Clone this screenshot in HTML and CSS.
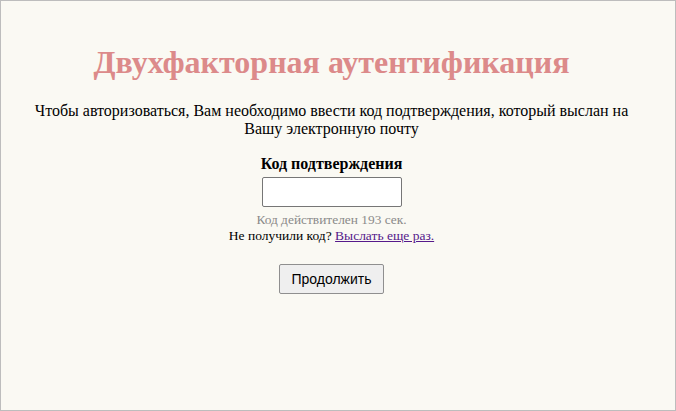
FILE: index.html
```html
<!DOCTYPE html>
<html lang="ru">

<head>
    <meta charset="UTF-8" />
    <meta name="viewport" content="width=device-width, initial-scale=1.0" />
    <title>Двухфакторная аутентификация</title>
    <link rel="stylesheet" href="styles.css">
</head>

<body>
    <div class="frame">
        <div class="container">
            <h1 class="title">Двухфакторная аутентификация</h1>
            <p class="intro">Чтобы авторизоваться, Вам необходимо ввести код подтверждения, который выслан на Вашу электронную почту</p>
            <form class="code-form">
                <label class="code-label" for="code">Код подтверждения</label>
                <input type="text" id="code" class="code-input" />
                <div class="timer">Код действителен 193 сек.</div>
                <div class="resend">Не получили код? <a href="#">Выслать еще раз.</a></div>
                <button type="submit" class="btn">Продолжить</button>
            </form>
        </div>
    </div>
</body>

</html>
```

FILE: styles.css
```css
html,
body {
    margin: 0;
    padding: 0;
}

body {
    font-family: "Liberation Serif", "Times New Roman", serif;
    color: #000;
    background: #faf9f3;
}

.frame {
    box-sizing: border-box;
    height: 411px;
    padding-right: 13px;
    border: 1px solid #bdbdbd;
    background: #faf9f3;
}

.container {
    max-width: 620px;
    margin: 0 auto;
    padding-top: 43px;
    text-align: center;
}

.title {
    font-size: 32px;
    font-weight: bold;
    color: #dc8a8a;
    margin: 0 0 21px;
}

.intro {
    font-size: 16px;
    line-height: 18px;
    margin: 0 0 17px;
}

.code-form {
    display: flex;
    flex-direction: column;
    align-items: center;
}

.code-label {
    font-weight: bold;
    font-size: 16px;
    margin-bottom: 4px;
}

.code-input {
    box-sizing: border-box;
    width: 140px;
    height: 30px;
    border: 1px solid #767676;
    border-radius: 2px;
    background: #fff;
}

.timer {
    font-size: 13.4px;
    color: #8a8a8a;
    margin-top: 5px;
}

.resend {
    font-size: 13.5px;
}

.resend a {
    color: #551a8b;
}

.btn {
    margin-top: 20px;
    font-family: Arial, "Liberation Sans", sans-serif;
    font-size: 14px;
    padding: 6px 11px;
    height: 30px;
    border: 1px solid #8f8f8f;
    border-radius: 2px;
    background: #efefef;
    color: #000;
}
```
